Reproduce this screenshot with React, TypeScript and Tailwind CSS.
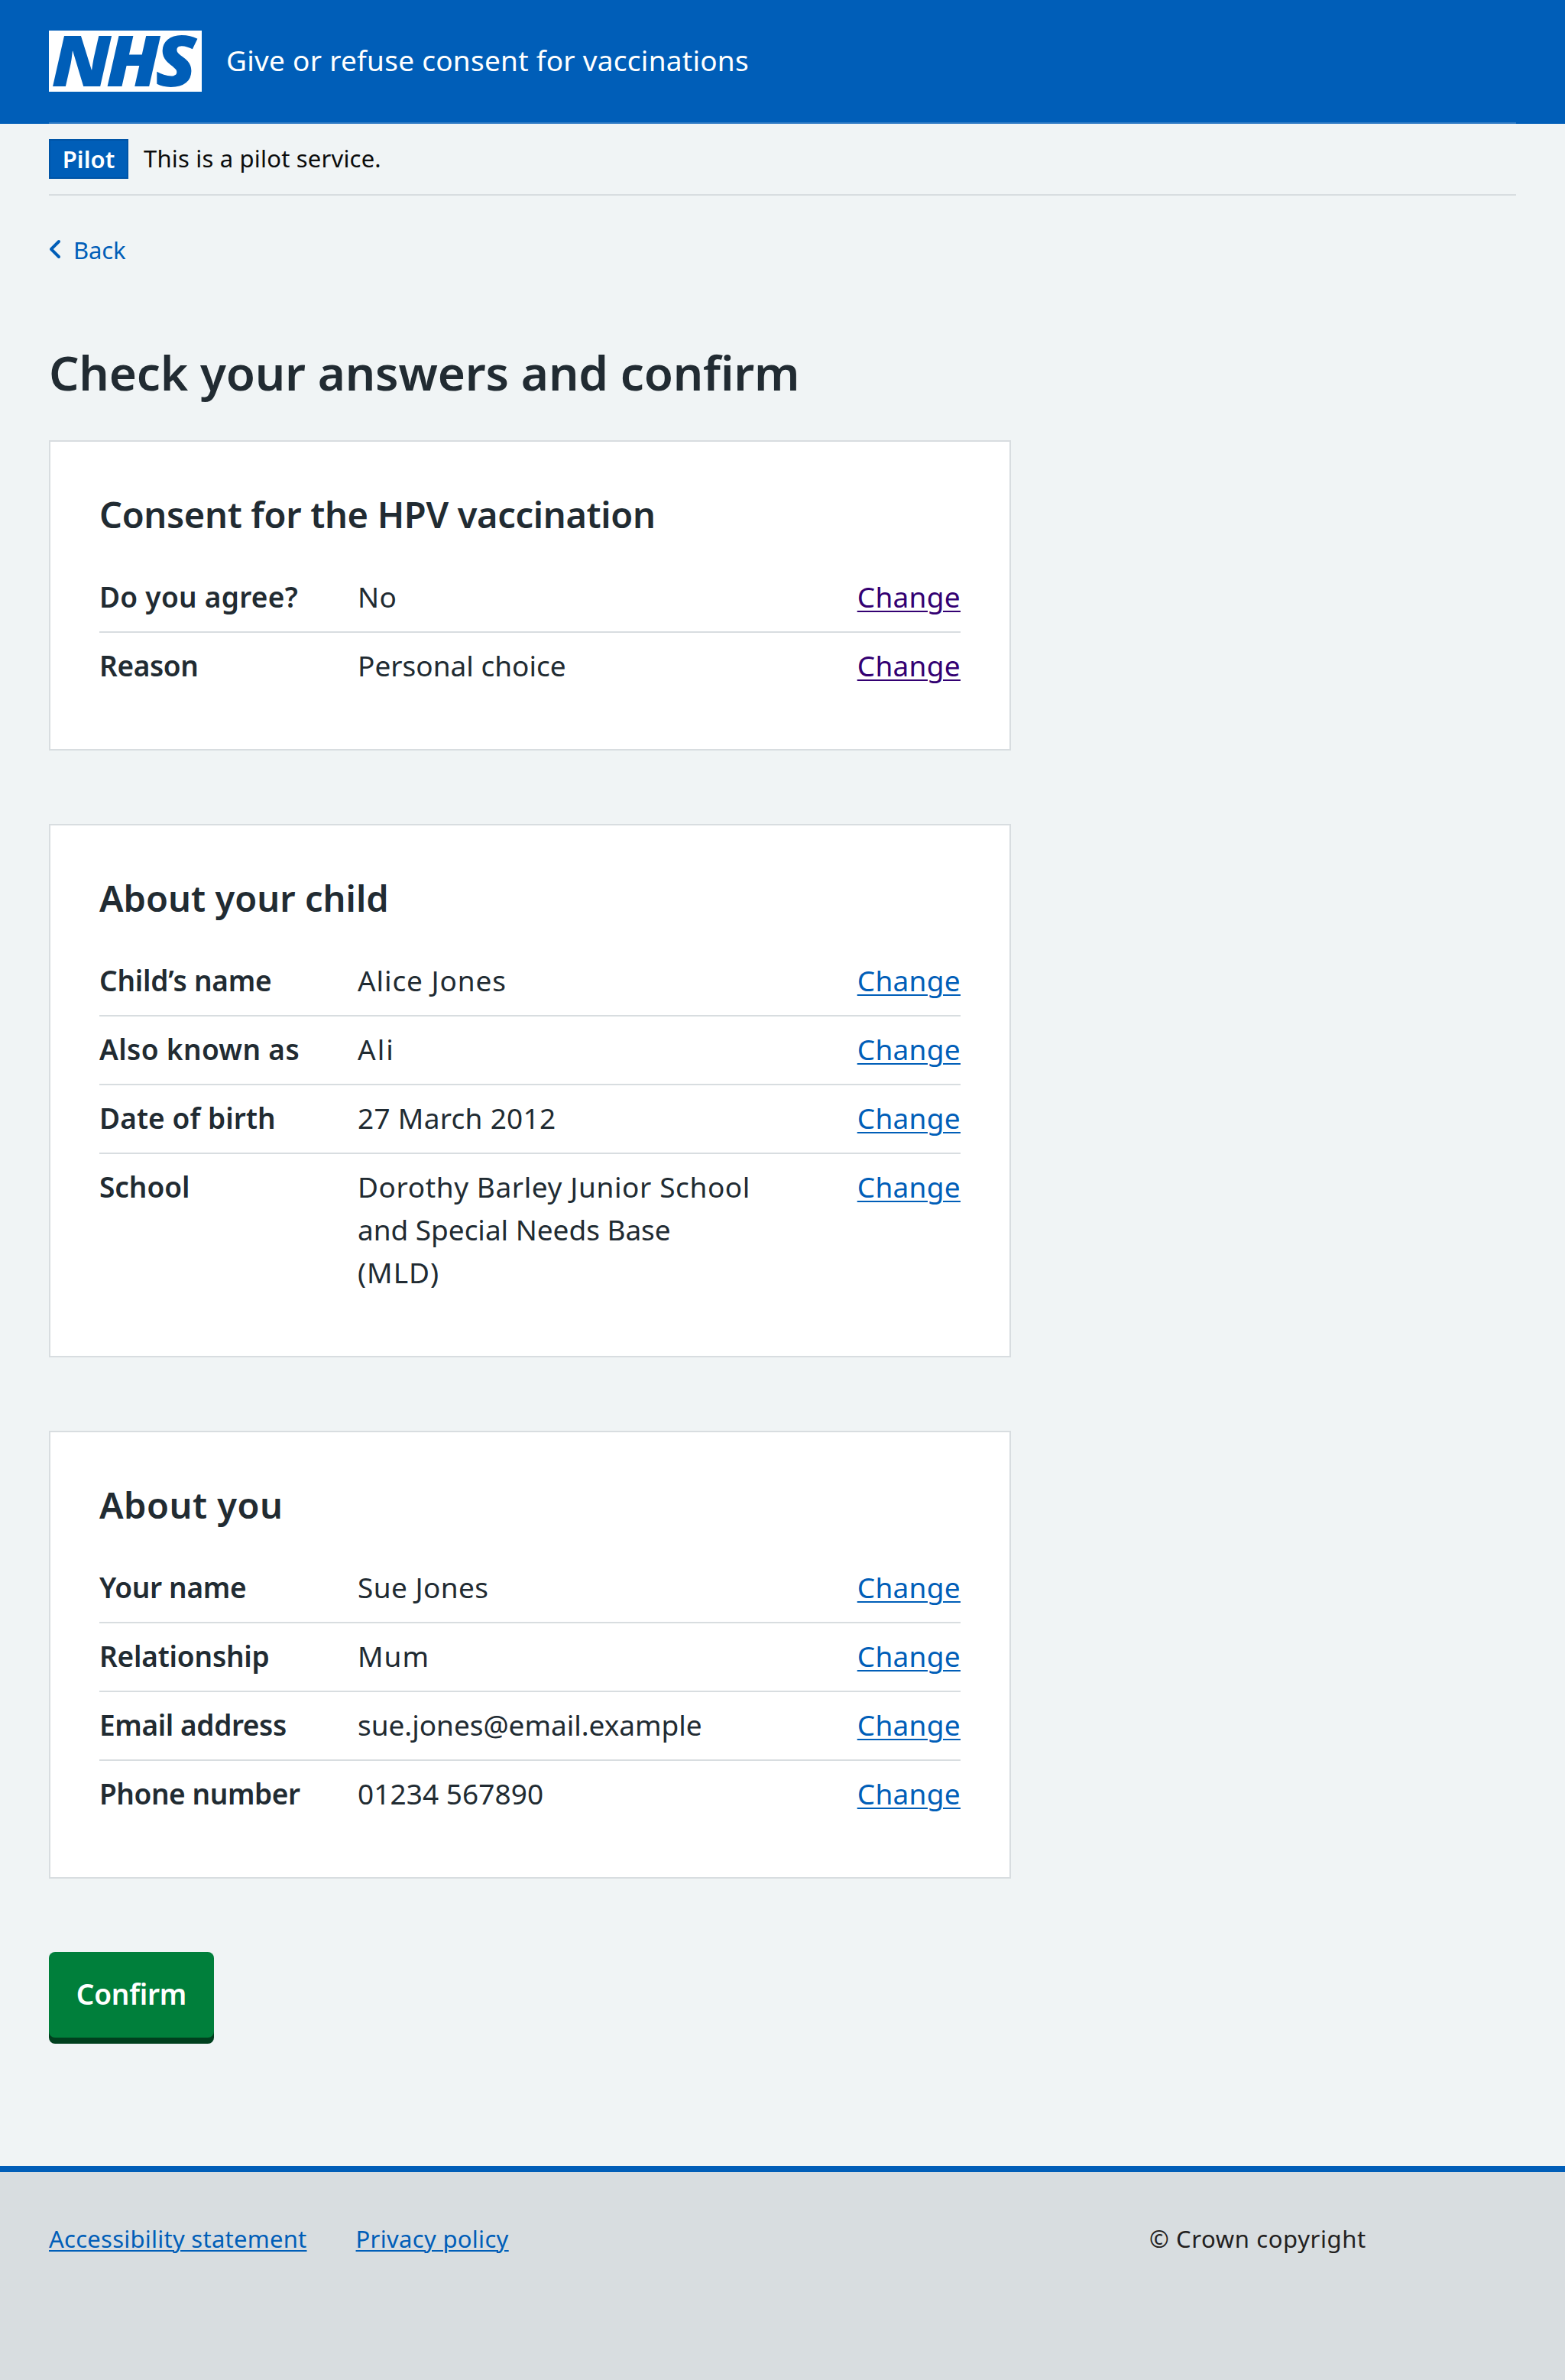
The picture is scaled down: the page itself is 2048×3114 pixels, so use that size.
type Item = { key: string; keyClass: string; lines: { text: string; className: string }[] };
type Section = { title: string; titleClass: string; visited?: boolean; items: Item[] };

const sections: Section[] = [
  {
    title: "Consent for the HPV vaccination",
    titleClass: "tracking-[-0.32px]",
    visited: true,
    items: [
      { key: "Do you agree?", keyClass: "tracking-[0.28px]", lines: [{ text: "No", className: "tracking-[0.3px]" }] },
      { key: "Reason", keyClass: "tracking-[-0.4px]", lines: [{ text: "Personal choice", className: "tracking-normal" }] },
    ],
  },
  {
    title: "About your child",
    titleClass: "tracking-[0.03px]",
    items: [
      { key: "Child’s name", keyClass: "tracking-[-0.2px]", lines: [{ text: "Alice Jones", className: "tracking-[0.9px]" }] },
      { key: "Also known as", keyClass: "tracking-[0.36px]", lines: [{ text: "Ali", className: "tracking-[2px]" }] },
      { key: "Date of birth", keyClass: "tracking-[0.1px]", lines: [{ text: "27 March 2012", className: "tracking-[0.29px]" }] },
      {
        key: "School",
        keyClass: "tracking-[-0.04px]",
        lines: [
          { text: "Dorothy Barley Junior School", className: "tracking-[0.6px]" },
          { text: "and Special Needs Base", className: "tracking-[-0.04px]" },
          { text: "(MLD)", className: "tracking-[1px]" },
        ],
      },
    ],
  },
  {
    title: "About you",
    titleClass: "tracking-[0.5px]",
    items: [
      { key: "Your name", keyClass: "tracking-[-0.29px]", lines: [{ text: "Sue Jones", className: "tracking-[0.43px]" }] },
      { key: "Relationship", keyClass: "tracking-[-0.2px]", lines: [{ text: "Mum", className: "tracking-[1px]" }] },
      { key: "Email address", keyClass: "tracking-[-0.38px]", lines: [{ text: "sue.jones@email.example", className: "tracking-[-0.04px]" }] },
      { key: "Phone number", keyClass: "tracking-[-0.42px]", lines: [{ text: "01234 567890", className: "tracking-[0.06px]" }] },
    ],
  },
];

function Logo() {
  return (
    <svg
      viewBox="0 0 200 80"
      role="img"
      aria-label="NHS"
      className="h-20 w-[200px] shrink-0 overflow-visible bg-white fill-[#005eb8] font-['Noto_Sans',sans-serif] text-[91.5px] font-black tracking-[-6px] italic"
    >
      <text transform="translate(3.5 72.5) scale(1.08 1)">NHS</text>
    </svg>
  );
}

function SummaryCard({ section }: { section: Section }) {
  const linkColour = section.visited ? "text-[#330072]" : "text-[#005eb8]";
  return (
    <section className="w-[1259px] border-2 border-[#d8dde0] bg-white px-16 pt-[65px] pb-[62px]">
      <h2 className={`mb-[35px] text-[47px] leading-[60px] font-semibold ${section.titleClass}`}>{section.title}</h2>
      <dl className="text-[37px] leading-[56px]">
        {section.items.map((item) => (
          <div key={item.key} className="flex border-b-2 border-[#d8dde0] pt-[15px] pb-[17px] last:border-transparent">
            <dt className={`w-[338px] shrink-0 font-semibold ${item.keyClass}`}>{item.key}</dt>
            <dd className="grow">
              {item.lines.map((line) => (
                <span key={line.text} className={`block ${line.className}`}>{line.text}</span>
              ))}
            </dd>
            <dd>
              <a href="#" className={`tracking-[0.3px] underline decoration-2 underline-offset-4 ${linkColour}`}>Change</a>
            </dd>
          </div>
        ))}
      </dl>
    </section>
  );
}

export default function App() {
  return (
    <div className="flex min-h-[3114px] flex-col bg-[#f0f4f5] font-['Noto_Sans',sans-serif] text-[#212b32]">
      <header className="h-[162px] bg-[#005eb8] px-16">
        <div className="flex h-[162px] items-start border-b-2 border-white/20 pt-10">
          <Logo />
          <span className="mt-[11px] ml-8 text-[37px] leading-[56px] tracking-[0.26px] text-white">
            Give or refuse consent for vaccinations
          </span>
        </div>
      </header>

      <div className="mx-16 flex h-[94px] items-start border-b-2 border-[#d8dde0] pt-5 text-[31px]">
        <strong className="h-[52px] w-[104px] border-2 border-[#0054a6] bg-[#005eb8] text-center leading-[48px] font-semibold tracking-[0.07px] text-white">
          Pilot
        </strong>
        <span className="mt-px ml-5 leading-[48px] tracking-[0.19px] text-[#0b0c0c]">This is a pilot service.</span>
      </div>

      <main className="grow px-16 pt-[46px]">
        <a href="#" className="flex h-12 items-start text-[31px] leading-[48px] text-[#005eb8]">
          <svg viewBox="0 0 24 24" className="-ml-4 size-12 fill-current" aria-hidden="true">
            <path d="M8.5 12c0-.3.1-.5.3-.7l5-5c.4-.4 1-.4 1.4 0s.4 1 0 1.4L10.9 12l4.3 4.3c.4.4.4 1 0 1.4s-1 .4-1.4 0l-5-5c-.2-.2-.3-.4-.3-.7z" />
          </svg>
          <span className="mt-px tracking-[-0.14px]">Back</span>
        </a>

        <h1 className="mt-[101px] mb-[53px] text-[62px] leading-[72px] font-semibold tracking-[-0.2px]">
          Check your answers and confirm
        </h1>

        <div className="flex flex-col gap-24">
          {sections.map((section) => (
            <SummaryCard key={section.title} section={section} />
          ))}
        </div>

        <button className="mt-24 h-28 w-[216px] rounded-lg bg-[#007f3b] pb-[2px] text-[37px] leading-[56px] font-semibold tracking-[-0.22px] text-white shadow-[0_8px_0_#00401e]">
          Confirm
        </button>
      </main>

      <footer className="h-[280px] border-t-8 border-[#005eb8] bg-[#d8dde0] px-16 pt-[63px] text-[31px] leading-[48px]">
        <div className="flex">
          <nav className="flex w-[1440px] gap-16 text-[#005eb8]">
            <a href="#" className="tracking-[0.25px] underline decoration-2 underline-offset-[3px]">Accessibility statement</a>
            <a href="#" className="tracking-[0.3px] underline decoration-2 underline-offset-[3px]">Privacy policy</a>
          </nav>
          <p className="tracking-[0.61px] text-[#231f20]">© Crown copyright</p>
        </div>
      </footer>
    </div>
  );
}
